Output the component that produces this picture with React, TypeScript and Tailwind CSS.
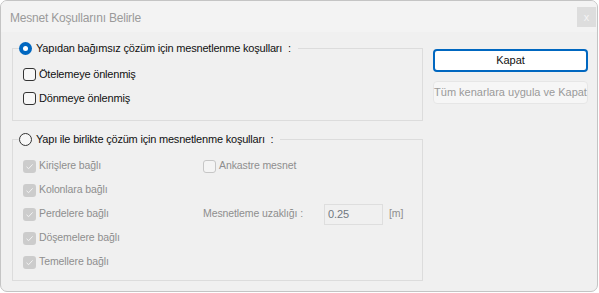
import React from "react"

function Check({ label, mode }: { label: string; mode: "on" | "off" | "disabledOn" | "disabledOff" }) {
  const disabled = mode === "disabledOn" || mode === "disabledOff"
  return (
    <div className="flex h-[24px] items-center">
      {mode === "disabledOn" ? (
        <span className="flex h-[13px] w-[13px] items-center justify-center rounded-[3px] bg-[#cccccc]">
          <svg width="9" height="9" viewBox="0 0 9 9" fill="none">
            <path d="M1.5 4.8 L3.6 6.7 L7.6 2.4" stroke="#f4f4f4" strokeWidth="1" />
          </svg>
        </span>
      ) : mode === "disabledOff" ? (
        <span className="h-[13px] w-[13px] rounded-[3px] border border-[#c6c6c6] bg-[#f4f4f4]" />
      ) : (
        <span className="h-[13px] w-[13px] rounded-[3px] border border-[#333333] bg-[#f7f7f7]" />
      )}
      <span
        className={
          disabled
            ? "ml-[3px] text-[10.5px] tracking-[-0.1px] text-[#8e8e8e]"
            : "ml-[3px] text-[11px] tracking-[-0.2px] text-[#111111]"
        }
      >
        {label}
      </span>
    </div>
  )
}

function Radio({ checked, label }: { checked: boolean; label: string }) {
  return (
    <div className="flex h-[16px] items-center">
      {checked ? (
        <span className="flex h-[13px] w-[13px] items-center justify-center rounded-full bg-[#0067c0]">
          <span className="h-[5px] w-[5px] rounded-full bg-white" />
        </span>
      ) : (
        <span className="h-[13px] w-[13px] rounded-full border border-[#333333] bg-[#f7f7f7]" />
      )}
      <span className="ml-[4px] whitespace-pre text-[11px] tracking-[-0.2px] text-[#111111]">{label}</span>
    </div>
  )
}

export default function App() {
  return (
    <div className="h-[293px] w-[599px] bg-white font-['Liberation_Sans',Arial,sans-serif]">
      <div className="flex h-[292px] w-[598px] flex-col overflow-hidden rounded-[7px] border border-[#c4c4c4] bg-[#f0f0f0]">
        <div className="flex h-[31px] shrink-0 items-start bg-[#f3f3f3]">
          <span className="ml-[9px] mt-[8px] text-[12px] tracking-[-0.2px] text-[#9a9a9a]">Mesnet Koşullarını Belirle</span>
          <span className="ml-auto mr-[1px] mt-[6px] flex h-[20px] w-[19px] items-center justify-center bg-[#dddddd] text-[11px] leading-none text-[#f4f4f4]">
            x
          </span>
        </div>

        <div className="flex">
          <div className="ml-[11px] flex w-[411px] flex-col">
            <fieldset className="mt-[8px] border border-[#dcdcdc] pb-[10px] pl-[10px] pt-[6px]">
              <legend className="ml-[-4px] pr-[7px]">
                <Radio checked label="Yapıdan bağımsız çözüm için mesnetlenme koşulları  :" />
              </legend>
              <div className="flex flex-col">
                <Check label="Ötelemeye önlenmiş" mode="off" />
                <Check label="Dönmeye önlenmiş" mode="off" />
              </div>
            </fieldset>

            <fieldset className="mt-[10px] border border-[#dcdcdc] pb-[6px] pl-[10px] pt-[7px]">
              <legend className="ml-[-4px] pr-[7px]">
                <Radio checked={false} label="Yapı ile birlikte çözüm için mesnetlenme koşulları  :" />
              </legend>
              <div className="grid grid-cols-[180px_1fr]">
                <div className="flex flex-col">
                  <Check label="Kirişlere bağlı" mode="disabledOn" />
                  <Check label="Kolonlara bağlı" mode="disabledOn" />
                  <Check label="Perdelere bağlı" mode="disabledOn" />
                  <Check label="Döşemelere bağlı" mode="disabledOn" />
                  <Check label="Temellere bağlı" mode="disabledOn" />
                </div>
                <div className="flex flex-col">
                  <Check label="Ankastre mesnet" mode="disabledOff" />
                  <div className="h-[24px]" />
                  <div className="flex h-[24px] items-center text-[10.5px] tracking-[-0.1px] text-[#8e8e8e]">
                    <span className="w-[121px]">Mesnetleme uzaklığı :</span>
                    <span className="flex h-[21px] w-[59px] items-center border border-[#dedede] bg-[#f0f0f0] pl-[3px] text-[11px] text-[#707880]">
                      0.25
                    </span>
                    <span className="ml-[6px]">[m]</span>
                  </div>
                </div>
              </div>
            </fieldset>
          </div>

          <div className="ml-[10px] mt-[17px] flex w-[155px] flex-col gap-[9px]">
            <button className="flex h-[23px] items-center justify-center rounded-[4px] border-2 border-[#0067c0] bg-white text-[11px] text-[#111111]">
              Kapat
            </button>
            <button className="flex h-[23px] items-center justify-center whitespace-nowrap rounded-[4px] border border-[#e6e6e6] bg-[#f6f6f6] text-[11px] text-[#9a9a9a]">
              Tüm kenarlara uygula ve Kapat
            </button>
          </div>
        </div>
      </div>
    </div>
  )
}
